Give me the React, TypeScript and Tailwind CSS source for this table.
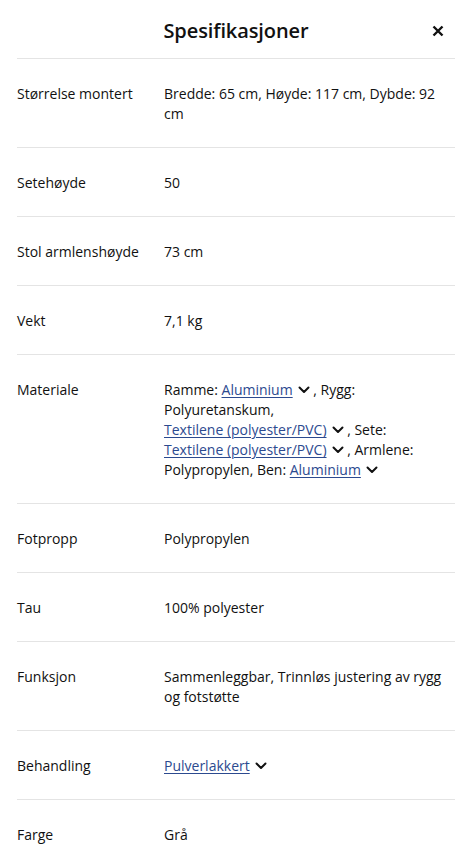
import React from "react";

const Chevron = () => (
  <svg width="12" height="8" viewBox="0 0 12 8" className="inline-block align-[1px] ml-[5px]" fill="none" stroke="#111" strokeWidth="2" strokeLinecap="round" strokeLinejoin="round">
    <path d="M1.5 1.5l4.5 4.5 4.5-4.5" />
  </svg>
);

const L = ({ children }: { children: React.ReactNode }) => (
  <span className="whitespace-nowrap">
    <a className="text-[#2c4a8f] underline underline-offset-2 decoration-1">{children}</a>
    <Chevron />
  </span>
);

const rows: { label: string; value: React.ReactNode }[] = [
  { label: "Størrelse montert", value: "Bredde: 65 cm, Høyde: 117 cm, Dybde: 92 cm" },
  { label: "Setehøyde", value: "50" },
  { label: "Stol armlenshøyde", value: "73 cm" },
  { label: "Vekt", value: "7,1 kg" },
  {
    label: "Materiale",
    value: (
      <>
        Ramme: <L>Aluminium</L> , Rygg: Polyuretanskum, <L>Textilene (polyester/PVC)</L> , Sete:{" "}
        <L>Textilene (polyester/PVC)</L> , Armlene: Polypropylen, Ben: <L>Aluminium</L>
      </>
    ),
  },
  { label: "Fotpropp", value: "Polypropylen" },
  { label: "Tau", value: "100% polyester" },
  { label: "Funksjon", value: "Sammenleggbar, Trinnløs justering av rygg og fotstøtte" },
  { label: "Behandling", value: <L>Pulverlakkert</L> },
  { label: "Farge", value: "Grå" },
];

export default function App() {
  return (
    <div className="w-[472px] h-[865px] overflow-hidden bg-white text-[#111] font-['Open_Sans',sans-serif]">
      <div className="mx-[17px]">
        <div className="h-[58px] pt-[4px] grid grid-cols-[1fr_auto_1fr] items-center">
          <div />
          <h2 className="text-[20px] font-semibold leading-[28px] tracking-[-0.1px]">Spesifikasjoner</h2>
          <div className="flex justify-end pr-[11px]">
            <svg width="12" height="12" viewBox="0 0 12 12" stroke="#111" strokeWidth="2.4" strokeLinecap="butt">
              <path d="M1.5 1.5l9 9M10.5 1.5l-9 9" />
            </svg>
          </div>
        </div>
        {rows.map((r) => (
          <div key={r.label} className="border-t border-[#e4e4e4] pt-[25px] pb-[23px] grid grid-cols-[147px_1fr] text-[14px] leading-5">
            <div>{r.label}</div>
            <div className="pr-[4px]">{r.value}</div>
          </div>
        ))}
      </div>
    </div>
  );
}
